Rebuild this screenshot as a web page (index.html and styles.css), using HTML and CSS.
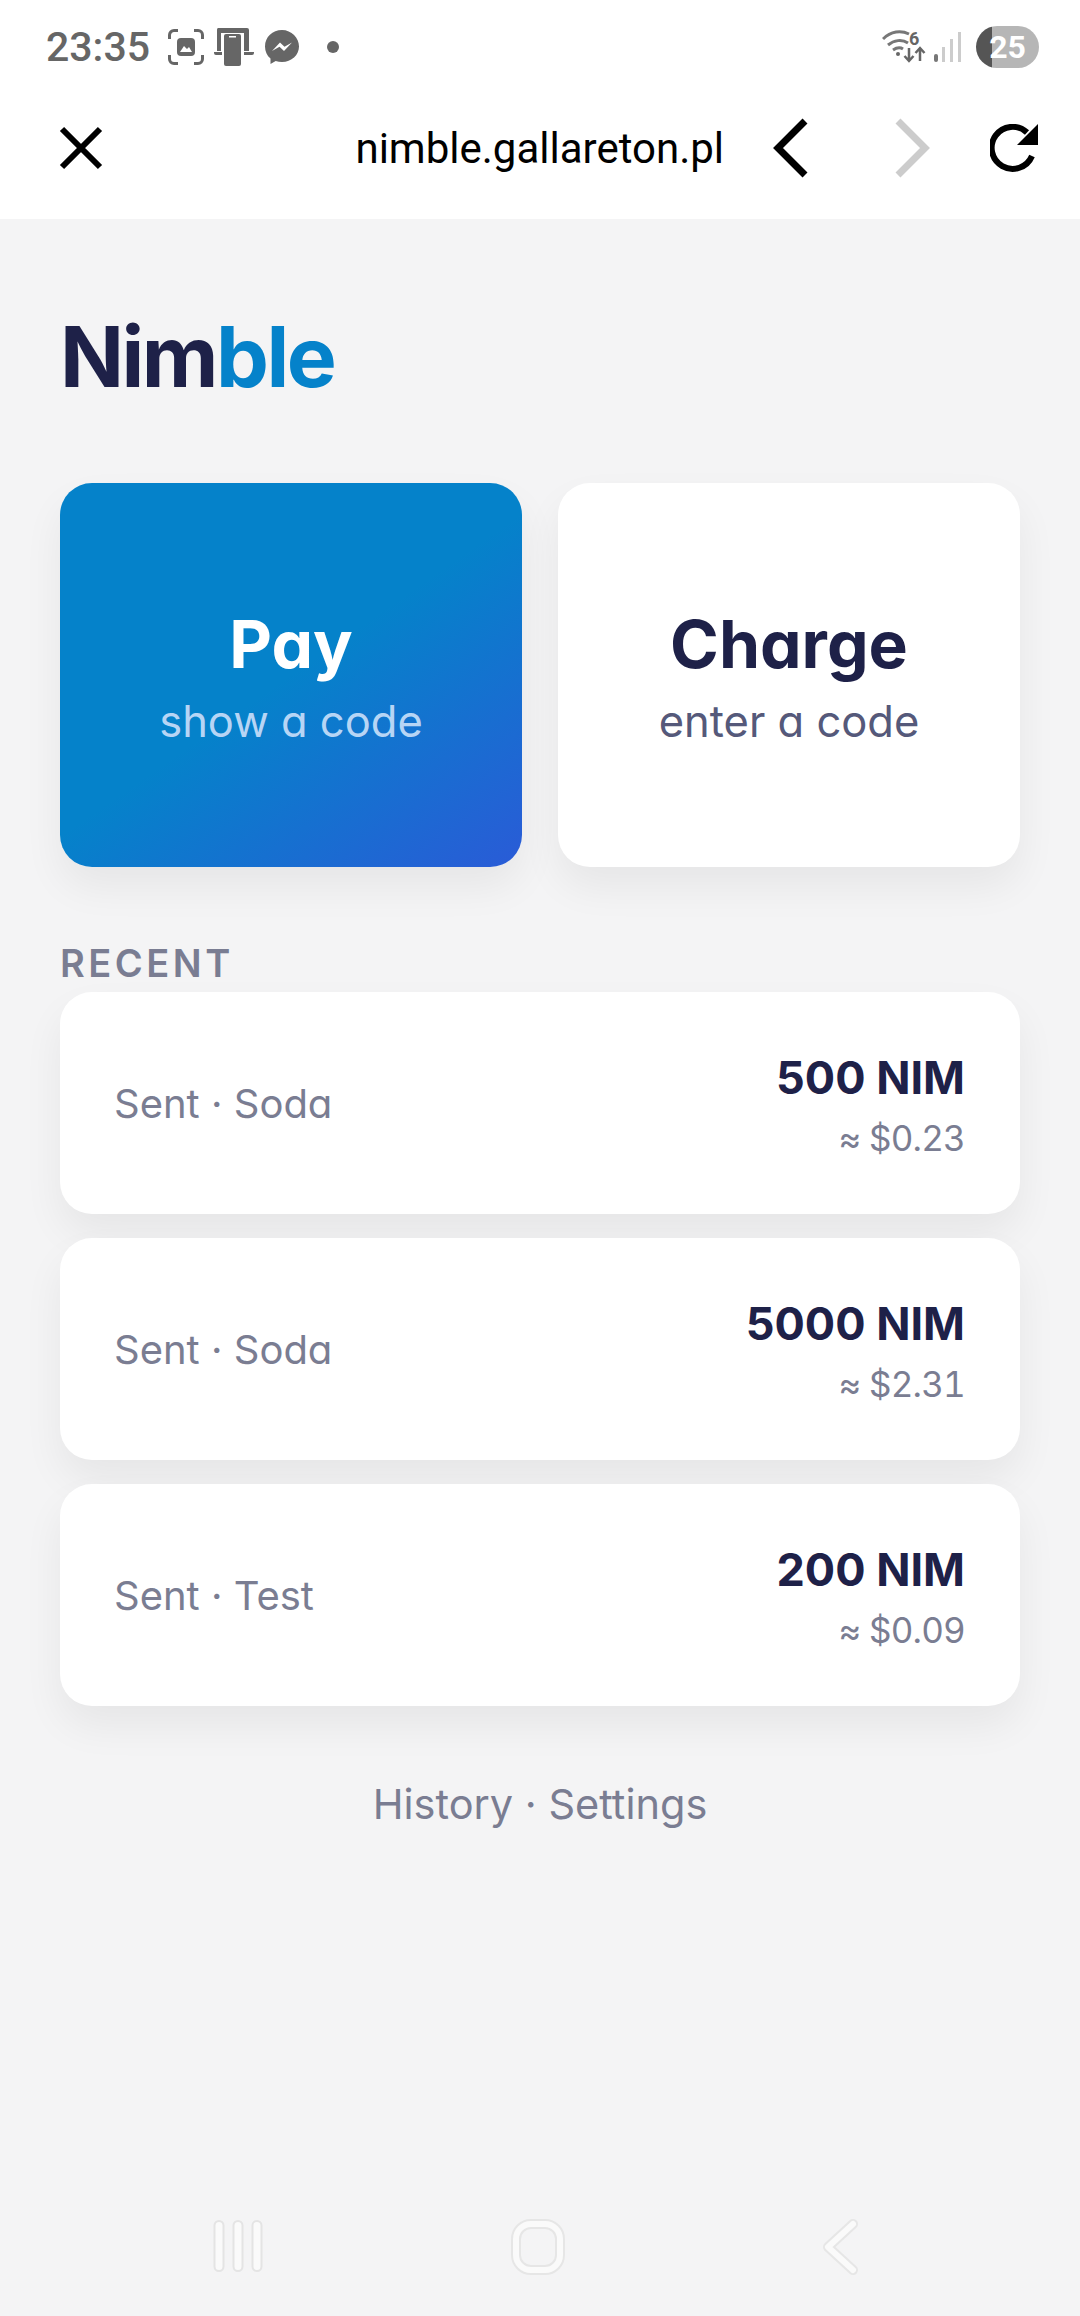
FILE: index.html
```html
<!DOCTYPE html>
<html lang="en">
<head>
    <meta charset="UTF-8">
    <meta name="viewport" content="width=device-width, initial-scale=1.0">
    <title>Nimble</title>
    <link rel="stylesheet" href="styles.css">
</head>
<body>
    <header class="browser">
        <div class="status-bar">
            <span class="clock">23:35</span>
            <svg class="icon-shot" width="36" height="36" viewBox="0 0 36 36">
                <path d="M1.5 10V6a4.500 4.500 0 0 1 4.500-4.500h4M26 1.500h4A4.500 4.500 0 0 1 34.500 6v4M34.500 26v4a4.500 4.500 0 0 1-4.500 4.500h-4M10 34.500H6A4.500 4.500 0 0 1 1.500 30v-4" fill="none" stroke="#666" stroke-width="3"/>
                <rect x="9" y="9" width="18" height="18" rx="4" fill="#666"/>
                <path d="M12 23l4-6 3 3 2-2 3 5z" fill="#fff"/>
            </svg>
            <svg class="icon-link" width="40" height="38" viewBox="0 0 40 38">
                <path d="M4 0h29a2 2 0 0 1 2 2v21h-5V5H7v18H3V2a2 2 0 0 1 1-2z" fill="#666"/>
                <path d="M0 24h8v3H2a2 2 0 0 1-2-2zM30 24h10v1a2 2 0 0 1-2 2h-8z" fill="#666"/>
                <rect x="10" y="6" width="17" height="32" rx="2" fill="#666"/>
                <rect x="15" y="8" width="7" height="1.500" fill="#fff"/>
            </svg>
            <svg class="icon-msg" width="34" height="35" viewBox="0 0 34 35">
                <path d="M17 0C7.500 0 0 7 0 16.500c0 5 2 9.200 5.500 12V34l5.200-2.900c2 .6 4.100.9 6.300.9 9.500 0 17-7 17-15.500S26.500 0 17 0z" fill="#666"/>
                <path d="M7 21l8-8.500 4.500 4.300 7.500-4.300-8 8.500-4.500-4.300z" fill="#fff"/>
            </svg>
            <span class="status-dot"></span>
            <span class="status-spacer"></span>
            <svg class="icon-wifi" width="44" height="42" viewBox="0 -4 44 42">
                <path d="M1 9C9 1 19 0 27 4M6 15c6-5 14-6 20-2M11 20c3-2 7-3 10-1" fill="none" stroke="#777" stroke-width="3"/>
                <circle cx="16" cy="24" r="2" fill="#666"/>
                <text x="27" y="15" class="wifi-six">6</text>
                <path d="M27 18v13M22.500 26l4.500 5 4.500-5M38 31V18M33.500 23l4.500-5 4.500 5" fill="none" stroke="#666" stroke-width="2.500"/>
            </svg>
            <svg class="icon-signal" width="28" height="30" viewBox="0 0 28 30">
                <rect x="0" y="22" width="4" height="8" rx="2" fill="#777"/>
                <rect x="8" y="15" width="3" height="15" fill="#ccc"/>
                <rect x="16" y="7" width="3" height="23" fill="#ccc"/>
                <rect x="24" y="0" width="3" height="30" fill="#ccc"/>
            </svg>
            <span class="battery"><span class="battery-level">25</span></span>
        </div>
        <div class="toolbar">
            <svg class="tool-close" width="44" height="44" viewBox="0 0 44 44">
                <path d="M3 3l38 38M41 3L3 41" stroke="#000" stroke-width="6" fill="none"/>
            </svg>
            <span class="url">nimble.gallareton.pl</span>
            <svg class="tool-back" width="36" height="60" viewBox="0 0 36 60">
                <path d="M32 3L5 30l27 27" stroke="#000" stroke-width="7" fill="none"/>
            </svg>
            <svg class="tool-next" width="36" height="60" viewBox="0 0 36 60">
                <path d="M4 3l27 27L4 57" stroke="#ccc" stroke-width="7" fill="none"/>
            </svg>
            <svg class="tool-reload" width="48" height="48" viewBox="0 0 48 48">
                <path d="M42 32A21 21 0 1 1 37 8.500" stroke="#000" stroke-width="6" fill="none"/>
                <path d="M48 0v21H27z" fill="#000"/>
            </svg>
        </div>
    </header>

    <main class="app">
        <h1 class="logo">Nim<span class="logo-accent">ble</span></h1>

        <div class="actions">
            <div class="action action-pay">
                <div class="action-title">Pay</div>
                <div class="action-sub">show a code</div>
            </div>
            <div class="action action-charge">
                <div class="action-title">Charge</div>
                <div class="action-sub">enter a code</div>
            </div>
        </div>

        <div class="section-label">RECENT</div>
        <div class="recent">
            <div class="tx">
                <div class="tx-name">Sent · Soda</div>
                <div class="tx-values">
                    <div class="tx-amount">500 NIM</div>
                    <div class="tx-fiat">≈ $0.23</div>
                </div>
            </div>
            <div class="tx">
                <div class="tx-name">Sent · Soda</div>
                <div class="tx-values">
                    <div class="tx-amount">5000 NIM</div>
                    <div class="tx-fiat">≈ $2.31</div>
                </div>
            </div>
            <div class="tx">
                <div class="tx-name">Sent · Test</div>
                <div class="tx-values">
                    <div class="tx-amount">200 NIM</div>
                    <div class="tx-fiat">≈ $0.09</div>
                </div>
            </div>
        </div>

        <div class="links">History · Settings</div>
    </main>

    <nav class="nav-bar">
        <svg width="52" height="54" viewBox="0 0 52 54">
            <rect x="1.500" y="2" width="9" height="50" rx="4.500" class="nav-shape"/>
            <rect x="20.500" y="2" width="9" height="50" rx="4.500" class="nav-shape"/>
            <rect x="39.500" y="2" width="9" height="50" rx="4.500" class="nav-shape"/>
        </svg>
        <svg width="54" height="56" viewBox="0 0 54 56">
            <rect x="5" y="5" width="44" height="46" rx="15" fill="none" stroke="#e6e6e6" stroke-width="10"/>
            <rect x="5" y="5" width="44" height="46" rx="15" fill="none" stroke="#fafafa" stroke-width="6"/>
        </svg>
        <svg width="40" height="56" viewBox="0 0 40 56">
            <path d="M32 5L7 28l25 23" fill="none" stroke="#e6e6e6" stroke-width="10" stroke-linecap="round" stroke-linejoin="round"/>
            <path d="M32 5L7 28l25 23" fill="none" stroke="#fafafa" stroke-width="6" stroke-linecap="round" stroke-linejoin="round"/>
        </svg>
    </nav>
</body>
</html>
```

FILE: styles.css
```css
html, body {
    margin: 0;
    padding: 0;
}
body {
    width: 1080px;
    height: 2316px;
    background: #f4f4f5;
    font-family: Inter, "Open Sans", sans-serif;
    font-feature-settings: "cv11" 1;
    display: flex;
    flex-direction: column;
    overflow: hidden;
}

/* browser chrome */
.browser {
    background: #fff;
    height: 219px;
    flex: none;
}
.status-bar {
    height: 94px;
    display: flex;
    align-items: center;
    padding: 0 41px 0 46px;
    box-sizing: border-box;
    font-family: Roboto, sans-serif;
}
.clock {
    font-size: 41px;
    font-weight: 500;
    color: #666;
    width: 122px;
}
.icon-link {
    margin-left: 10px;
}
.icon-msg {
    margin-left: 11px;
}
.status-dot {
    width: 12px;
    height: 12px;
    border-radius: 50%;
    background: #666;
    margin-left: 28px;
}
.status-spacer {
    flex: 1;
}
.wifi-six {
    font-size: 18px;
    font-weight: 700;
    fill: #666;
}
.icon-signal {
    margin-left: 8px;
}
.battery {
    width: 63px;
    height: 42px;
    border-radius: 21px;
    margin-left: 14px;
    background: linear-gradient(90deg, #555 16px, #b6b6b6 16px);
    display: flex;
    align-items: center;
    justify-content: center;
}
.battery-level {
    color: #fff;
    font-size: 32px;
    font-weight: 700;
}
.toolbar {
    height: 108px;
    display: flex;
    align-items: center;
    padding: 0 42px 0 59px;
}
.url {
    font-family: Roboto, sans-serif;
    font-size: 42px;
    color: #000;
    margin-left: auto;
    margin-right: 49px;
}
.tool-next {
    margin-left: 85px;
}
.tool-reload {
    margin-left: 60px;
}

/* app */
.app {
    flex: 1;
    padding: 0 60px;
}
.logo {
    margin: 88px 0 0;
    font-size: 84px;
    line-height: 100px;
    font-weight: 750;
    letter-spacing: -2.500px;
    color: #1e2148;
}
.logo-accent {
    color: #0582ca;
}
.actions {
    display: grid;
    grid-template-columns: 462px 462px;
    gap: 36px;
    margin-top: 76px;
}
.action {
    height: 384px;
    border-radius: 32px;
    display: flex;
    flex-direction: column;
    align-items: center;
    justify-content: center;
    text-align: center;
    box-shadow: 0 20px 40px rgba(0,0,0,0.06);
}
.action-pay {
    background: linear-gradient(145deg, #0582ca 50%, #2a5bd7 100%);
    color: #fff;
}
.action-charge {
    background: #fff;
    color: #1e2148;
}
.action-title {
    font-size: 66px;
    line-height: 80px;
    font-weight: 750;
}
.action-sub {
    font-size: 43.500px;
    line-height: 50px;
    margin-top: 12px;
    color: #55597a;
}
.action-pay .action-sub {
    color: #b7d5f5;
}
.section-label {
    margin-top: 74px;
    font-size: 38px;
    line-height: 44px;
    font-weight: 600;
    letter-spacing: 3.500px;
    color: #7a7d92;
}
.recent {
    display: flex;
    flex-direction: column;
    gap: 24px;
    margin-top: 7px;
}
.tx {
    height: 222px;
    padding: 0 55px 0 54px;
    box-sizing: border-box;
    background: #fff;
    border-radius: 32px;
    display: flex;
    align-items: center;
    justify-content: space-between;
    box-shadow: 0 20px 40px rgba(0,0,0,0.06);
}
.tx-name {
    font-size: 40px;
    color: #7a7d92;
}
.tx-values {
    text-align: right;
}
.tx-amount {
    font-size: 45px;
    line-height: 60px;
    font-weight: 700;
    color: #1e2148;
    padding-top: 2px;
}
.tx-fiat {
    font-size: 35px;
    line-height: 44px;
    margin-top: 8px;
    letter-spacing: -0.800px;
    font-variant-numeric: tabular-nums;
    color: #7a7d92;
}
.links {
    margin-top: 73px;
    text-align: center;
    font-size: 41.500px;
    line-height: 50px;
    color: #7a7d92;
}

/* android nav */
.nav-bar {
    height: 97px;
    flex: none;
    display: flex;
    align-items: flex-start;
}
.nav-bar svg:nth-child(1) {
    margin-left: 213px;
}
.nav-bar svg:nth-child(2) {
    margin-left: 246px;
}
.nav-bar svg:nth-child(3) {
    margin-left: 256px;
}
.nav-shape {
    fill: #fafafa;
    stroke: #e4e4e4;
    stroke-width: 2;
}
```
